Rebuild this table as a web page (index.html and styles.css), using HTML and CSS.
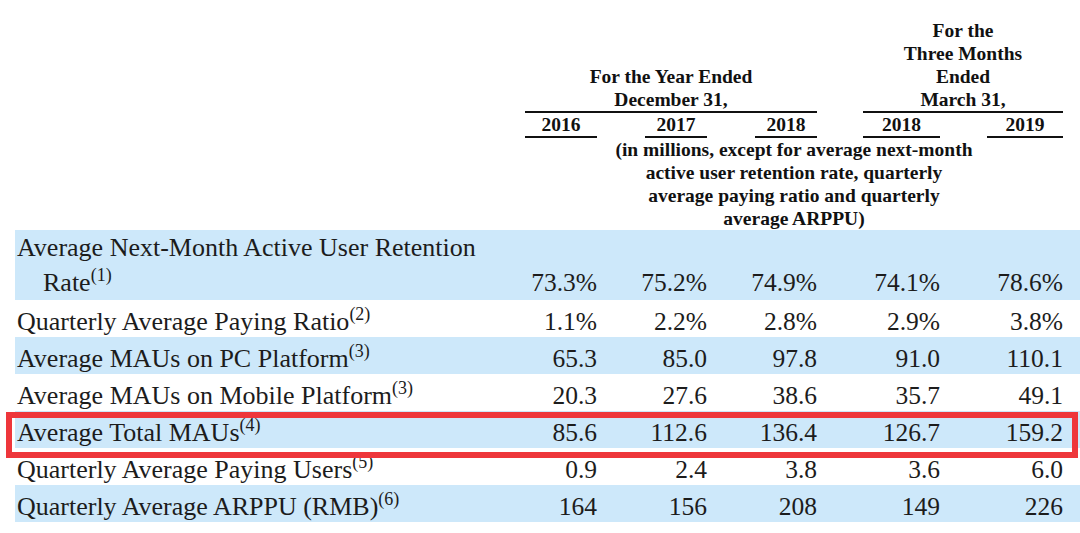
FILE: index.html
```html
<!DOCTYPE html>
<html lang="en">
<head>
<meta charset="utf-8">
<title>Operating Metrics</title>
<link rel="stylesheet" href="styles.css">
</head>
<body>
<div class="table">
  <div class="row head-groups">
    <div class="cell"></div>
    <div class="group group-year">For the Year Ended<br>December 31,</div>
    <div class="group group-quarter">For the<br>Three Months<br>Ended<br>March 31,</div>
  </div>
  <div class="row head-years">
    <div class="cell"></div>
    <div class="year"><span class="year-label w72">2016</span></div>
    <div class="year"><span class="year-label w62">2017</span></div>
    <div class="year"><span class="year-label w62">2018</span></div>
    <div class="year"><span class="year-label w77">2018</span></div>
    <div class="year"><span class="year-label w76">2019</span></div>
  </div>
  <div class="row head-note">
    <div class="cell"></div>
    <div class="note">(in millions, except for average next-month<br>active user retention rate, quarterly<br>average paying ratio and quarterly<br>average ARPPU)</div>
  </div>

  <div class="row data tall shaded">
    <div class="label">Average Next-Month Active User Retention Rate<sup>(1)</sup></div>
    <div class="num">73.3%</div>
    <div class="num">75.2%</div>
    <div class="num">74.9%</div>
    <div class="num">74.1%</div>
    <div class="num">78.6%</div>
  </div>
  <div class="row data">
    <div class="label">Quarterly Average Paying Ratio<sup>(2)</sup></div>
    <div class="num">1.1%</div>
    <div class="num">2.2%</div>
    <div class="num">2.8%</div>
    <div class="num">2.9%</div>
    <div class="num">3.8%</div>
  </div>
  <div class="row data shaded">
    <div class="label">Average MAUs on PC Platform<sup>(3)</sup></div>
    <div class="num">65.3</div>
    <div class="num">85.0</div>
    <div class="num">97.8</div>
    <div class="num">91.0</div>
    <div class="num">110.1</div>
  </div>
  <div class="row data">
    <div class="label">Average MAUs on Mobile Platform<sup>(3)</sup></div>
    <div class="num">20.3</div>
    <div class="num">27.6</div>
    <div class="num">38.6</div>
    <div class="num">35.7</div>
    <div class="num">49.1</div>
  </div>
  <div class="row data shaded highlighted">
    <div class="label">Average Total MAUs<sup>(4)</sup></div>
    <div class="num">85.6</div>
    <div class="num">112.6</div>
    <div class="num">136.4</div>
    <div class="num">126.7</div>
    <div class="num">159.2</div>
    <div class="highlight-box"></div>
  </div>
  <div class="row data">
    <div class="label">Quarterly Average Paying Users<sup>(5)</sup></div>
    <div class="num">0.9</div>
    <div class="num">2.4</div>
    <div class="num">3.8</div>
    <div class="num">3.6</div>
    <div class="num">6.0</div>
  </div>
  <div class="row data shaded">
    <div class="label">Quarterly Average ARPPU (RMB)<sup>(6)</sup></div>
    <div class="num">164</div>
    <div class="num">156</div>
    <div class="num">208</div>
    <div class="num">149</div>
    <div class="num">226</div>
  </div>
</div>
</body>
</html>
```

FILE: styles.css
```css
html, body {
  margin: 0;
  padding: 0;
  background: #ffffff;
}

body {
  width: 1080px;
  height: 533px;
  overflow: hidden;
  font-family: "Liberation Serif", "Times New Roman", serif;
  color: #1c1c1c;
}

.table {
  padding: 19px 0 0 15px;
}

.row {
  display: grid;
  grid-template-columns: 510px 72px 110px 110px 123px 123px 17px;
}

/* ---------- header ---------- */
.head-groups,
.head-years,
.head-note {
  font-weight: bold;
  font-size: 19.5px;
  line-height: 23px;
  color: #111111;
}

.head-groups {
  align-items: end;
}

.group {
  text-align: center;
  border-bottom: 2px solid #111111;
}

.group-year {
  grid-column: 2 / 5;
}

.group-quarter {
  grid-column: 5 / 7;
  margin-left: 46px;
}

.year {
  display: flex;
  justify-content: flex-end;
}

.year-label {
  display: block;
  text-align: center;
  border-bottom: 2px solid #111111;
}

.w72 { width: 72px; }
.w62 { width: 62px; }
.w77 { width: 77px; }
.w76 { width: 76px; }

.note {
  grid-column: 2 / 7;
  text-align: center;
}

/* ---------- body rows ---------- */
.data {
  font-size: 25.5px;
  line-height: 30px;
  padding-top: 7px;
  align-items: end;
}

.data.tall {
  line-height: 35px;
  padding-top: 0;
}

.shaded {
  background: #cde8fa;
}

.label {
  font-size: 26px;
  padding-left: 28px;
  text-indent: -26px;
}

.num {
  text-align: right;
}

sup {
  font-size: 18px;
  line-height: 0;
  vertical-align: 10px;
}

.highlighted {
  position: relative;
}

.highlight-box {
  position: absolute;
  left: -9px;
  right: 2px;
  top: 1px;
  bottom: -10px;
  border: 6px solid #ee363b;
  pointer-events: none;
}
```
